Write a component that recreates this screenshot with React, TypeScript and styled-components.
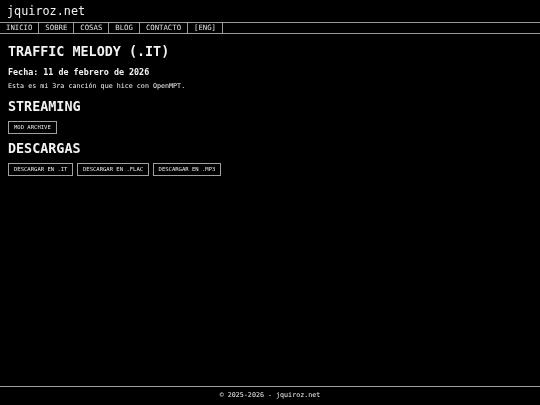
import styled, { createGlobalStyle } from "styled-components";

const GlobalStyles = createGlobalStyle`
  html, body {
    margin: 0;
    padding: 0;
    background: #000;
    color: #f2f2f2;
    font-family: "DejaVu Sans Mono", "Liberation Mono", monospace;
    -webkit-font-smoothing: antialiased;
  }
`;

const Page = styled.div`
  min-height: 100vh;
  display: flex;
  flex-direction: column;
  filter: grayscale(1);
`;

const Header = styled.header`
  padding: 4px 7px;
  font-size: 11.8px;
  line-height: 14px;
`;

const Nav = styled.nav`
  display: flex;
  border-top: 1px solid #9a9a9a;
  border-bottom: 1px solid #9a9a9a;
`;

const NavItem = styled.a`
  padding: 0 6px;
  border-right: 1px solid #9a9a9a;
  font-size: 7.3px;
  line-height: 10px;
  color: #e0e0e0;
  text-decoration: none;
`;

const Main = styled.main`
  flex: 1;
  padding: 10px 8px 0;
`;

const Title = styled.h1`
  margin: 0;
  font-size: 13.4px;
  line-height: 16px;
  font-weight: bold;
`;

const Section = styled.h2<{ $top: number }>`
  margin: ${(p) => p.$top}px 0 0;
  font-size: 13.4px;
  line-height: 16px;
  font-weight: bold;
`;

const DateLine = styled.p`
  margin: 7px 0 0;
  font-size: 8.4px;
  line-height: 10px;
  font-weight: bold;
`;

const Text = styled.p`
  margin: 5px 0 0;
  font-size: 6.7px;
  line-height: 8px;
`;

const ButtonRow = styled.div`
  display: flex;
  gap: 3.5px;
  margin-top: 5.5px;
`;

const LinkButton = styled.a`
  display: inline-block;
  padding: 2px 5px;
  border: 1px solid #a0a0a0;
  font-size: 5.55px;
  line-height: 7.5px;
  color: #e6e6e6;
  text-decoration: none;
`;

const Footer = styled.footer`
  border-top: 1px solid #a0a0a0;
  padding: 3px 0 5px;
  text-align: center;
  font-size: 6.7px;
  line-height: 10px;
`;

const links = ["INICIO", "SOBRE", "COSAS", "BLOG", "CONTACTO", "[ENG]"];
const downloads = [".IT", ".FLAC", ".MP3"];

const App = () => {
  return (
    <>
      <GlobalStyles />
      <Page>
        <Header>jquiroz.net</Header>
        <Nav>
          {links.map((l) => (
            <NavItem key={l} href="#">
              {l}
            </NavItem>
          ))}
        </Nav>
        <Main>
          <Title>TRAFFIC MELODY (.IT)</Title>
          <DateLine>Fecha: 11 de febrero de 2026</DateLine>
          <Text>Esta es mi 3ra canción que hice con OpenMPT.</Text>
          <Section $top={9}>STREAMING</Section>
          <ButtonRow>
            <LinkButton href="#">MOD ARCHIVE</LinkButton>
          </ButtonRow>
          <Section $top={7}>DESCARGAS</Section>
          <ButtonRow>
            {downloads.map((d) => (
              <LinkButton key={d} href="#">
                DESCARGAR EN {d}
              </LinkButton>
            ))}
          </ButtonRow>
        </Main>
        <Footer>© 2025-2026 - jquiroz.net</Footer>
      </Page>
    </>
  );
};

export default App;
